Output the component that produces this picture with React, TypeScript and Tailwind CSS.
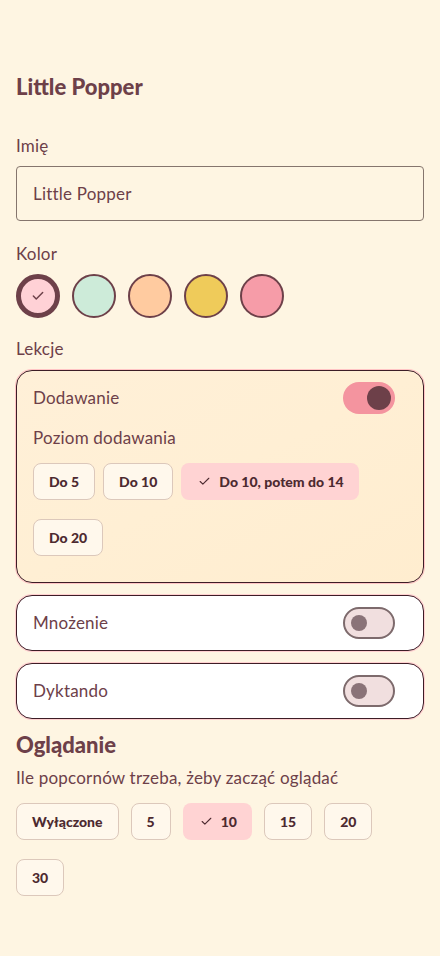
import { Check } from "lucide-react";

const BODY = "font-['Lato','Noto_Sans',sans-serif]";
const HEAD = "font-['Lato','Noto_Sans',sans-serif] font-black";

const COLORS = [
  { name: "pink", bg: "bg-[#ffd1d6]", selected: true },
  { name: "mint", bg: "bg-[#cdebd9]" },
  { name: "peach", bg: "bg-[#ffcba0]" },
  { name: "yellow", bg: "bg-[#efcb5a]" },
  { name: "rose", bg: "bg-[#f69ca8]" }
];

function Chip({ label, selected = false }: { label: string; selected?: boolean }) {
  if (selected) {
    return (
      <span className={`${HEAD} inline-flex h-[37px] items-center gap-[8px] rounded-lg bg-[#ffd3d3] pl-[17px] pr-[15px] text-[14px] text-[#4d2a30]`}>
        <Check className="h-[13px] w-[13px]" strokeWidth={2} />
        {label}
      </span>
    );
  }
  return (
    <span className={`${HEAD} inline-flex h-[37px] items-center rounded-lg border border-[#dcc8bb] bg-[#fff8ec] px-[15px] text-[14px] text-[#4d2a30]`}>
      {label}
    </span>
  );
}

function Toggle({ on }: { on: boolean }) {
  if (on) {
    return (
      <div className="flex h-[32px] w-[52px] items-center justify-end rounded-full bg-[#f4949f] pr-[4px]">
        <div className="h-[24px] w-[24px] rounded-full bg-[#6d4049]" />
      </div>
    );
  }
  return (
    <div className="flex h-[32px] w-[52px] items-center rounded-full border-2 border-[#7d6a6c] bg-[#f1dfdf] pl-[6px]">
      <div className="h-[16px] w-[16px] rounded-full bg-[#8a7378]" />
    </div>
  );
}

function LessonRow({ label }: { label: string }) {
  return (
    <div className="flex h-[56px] items-center justify-between rounded-2xl border-[1.5px] border-[#3d1d26] bg-white pl-[16px] pr-[28px] shadow-[0_0_0_1px_#ffd0d0]">
      <span className="text-[17px] tracking-[0.2px] text-[#6d4049]">{label}</span>
      <Toggle on={false} />
    </div>
  );
}

export default function App() {
  return (
    <div className={`${BODY} min-h-[956px] w-[440px] bg-[#fef5e2] px-4 pt-[73px] pb-10 text-[17px] tracking-[0.2px] text-[#6d4049]`}>
      <h1 className={`${HEAD} text-[22px] leading-[28px] tracking-normal text-[#6d4049]`}>Little Popper</h1>

      <p className="mt-[34px] leading-[22px]">Imię</p>
      <div className="mt-[9px] flex h-[55px] items-center rounded border border-[#85756d] px-4">
        Little Popper
      </div>

      <p className="mt-[22px] leading-[22px]">Kolor</p>
      <div className="mt-[9px] flex gap-3">
        {COLORS.map((c) =>
          c.selected ? (
            <div key={c.name} className={`flex h-[44px] w-[44px] items-center justify-center rounded-full border-[5px] border-[#6d4049] ${c.bg}`}>
              <Check className="h-[14px] w-[14px] text-[#6d4049]" strokeWidth={2.5} />
            </div>
          ) : (
            <div key={c.name} className={`h-[44px] w-[44px] rounded-full border-2 border-[#6d4049] ${c.bg}`} />
          )
        )}
      </div>

      <p className="mt-[20px] leading-[22px]">Lekcje</p>
      <div className="mt-[10px] flex flex-col gap-3">
        <div className="rounded-2xl border-[1.5px] border-[#3d1d26] bg-gradient-to-br from-[#fff0d8] via-[#ffefd4] to-[#ffedcf] px-[16px] pt-[11px] pb-[26px] shadow-[0_0_0_1px_#ffc4c4]">
          <div className="flex items-center justify-between pr-[12px]">
            <span>Dodawanie</span>
            <Toggle on />
          </div>
          <p className="mt-[13px] leading-[22px]">Poziom dodawania</p>
          <div className="mt-[14px] flex flex-wrap gap-x-[8px] gap-y-[19px] tracking-normal">
            <Chip label="Do 5" />
            <Chip label="Do 10" />
            <Chip label="Do 10, potem do 14" selected />
            <Chip label="Do 20" />
          </div>
        </div>
        <LessonRow label="Mnożenie" />
        <LessonRow label="Dyktando" />
      </div>

      <h2 className={`${HEAD} mt-[12px] text-[22px] leading-[28px] tracking-normal text-[#6d4049]`}>Oglądanie</h2>
      <p className="mt-[8px] leading-[22px]">Ile popcornów trzeba, żeby zacząć oglądać</p>
      <div className="mt-[14px] flex flex-wrap gap-x-[12px] gap-y-[19px] tracking-normal">
        <Chip label="Wyłączone" />
        <Chip label="5" />
        <Chip label="10" selected />
        <Chip label="15" />
        <Chip label="20" />
        <Chip label="30" />
      </div>
    </div>
  );
}
